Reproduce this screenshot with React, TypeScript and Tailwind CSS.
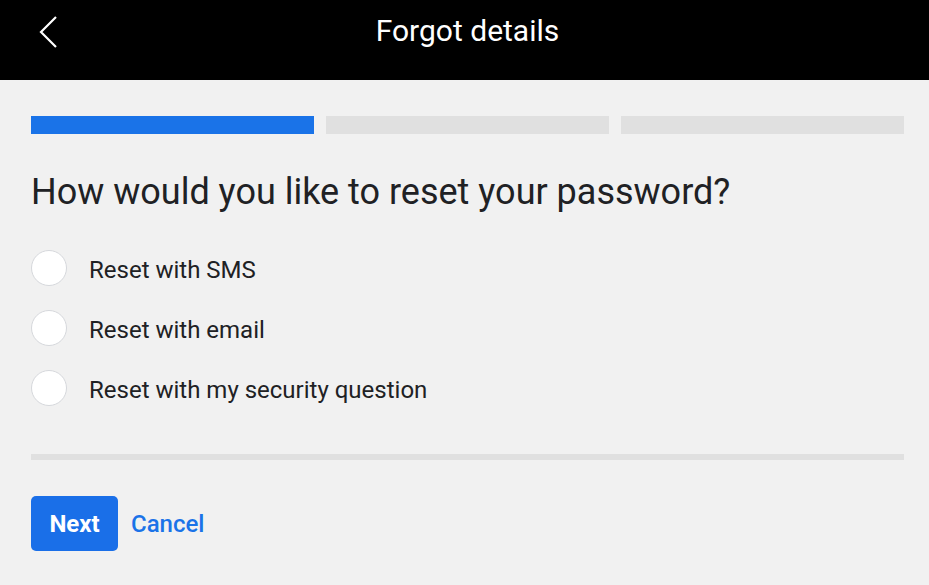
import { useState } from 'react';

const options = [
    'Reset with SMS',
    'Reset with email',
    'Reset with my security question',
];

export default function App() {
    const [choice, setChoice] = useState<number | null>(null);

    return (
        <div className="min-h-[585px] bg-[#f1f1f1] font-['Roboto',sans-serif] text-[#202124]">
            <div className="relative flex h-20 items-start justify-center bg-black pt-[13px]">
                <button className="absolute left-[38px] top-[15px] p-0">
                    <svg width="22" height="34" viewBox="0 0 22 34" fill="none">
                        <path d="M18 2 L3 17 L18 32" stroke="white" strokeWidth="2.2" />
                    </svg>
                </button>
                <h1 className="pl-[6px] text-[30px] leading-[35px] text-white">Forgot details</h1>
            </div>

            <div className="pl-[31px] pr-[25px] pt-9">
                <div className="flex gap-3">
                    <div className="h-[18px] flex-1 bg-[#1a73e8]" />
                    <div className="h-[18px] flex-1 bg-[#e0e0e0]" />
                    <div className="h-[18px] flex-1 bg-[#e0e0e0]" />
                </div>

                <h2 className="mt-[37px] text-[36px] leading-[42px]">How would you like to reset your password?</h2>

                <div className="mt-[37px] flex flex-col gap-6">
                    {options.map((o, i) => (
                        <label key={o} className="flex h-9 cursor-pointer items-center gap-[22px]" onClick={() => setChoice(i)}>
                            <span className="flex h-9 w-9 items-center justify-center rounded-full border border-[#d6d8dc] bg-white">
                                {choice === i && <span className="h-4 w-4 rounded-full bg-[#1a73e8]" />}
                            </span>
                            <span className="pt-1 text-[24px] leading-[28px]">{o}</span>
                        </label>
                    ))}
                </div>

                <div className="mt-12 h-[6px] bg-[#e0e0e0]" />

                <div className="mt-9 flex items-center gap-[13px]">
                    <button className="h-[55px] w-[87px] rounded-[5px] bg-[#1a6fe8] text-[24px] font-bold text-white">Next</button>
                    <button className="text-[24px] font-medium text-[#1a73e8]">Cancel</button>
                </div>
            </div>
        </div>
    );
}
